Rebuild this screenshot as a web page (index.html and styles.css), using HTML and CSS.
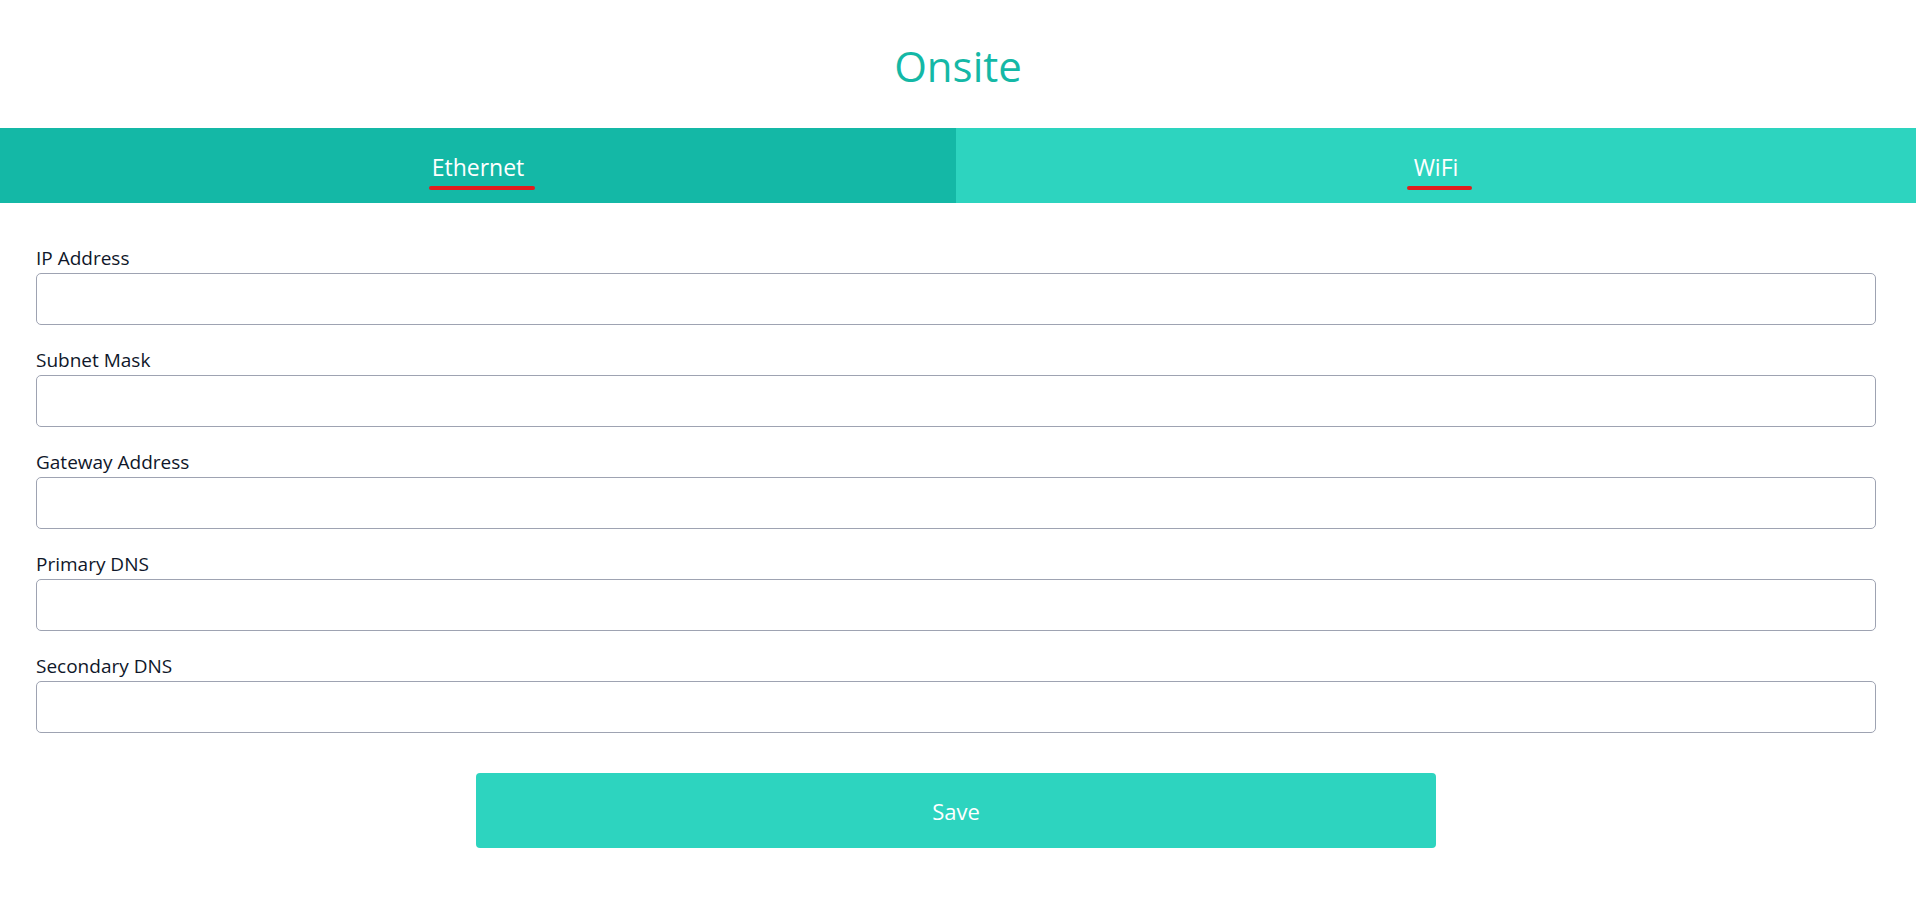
FILE: index.html
```html
<!DOCTYPE html>
<html lang="en">
<head>
<meta charset="utf-8">
<title>Onsite</title>
<link rel="stylesheet" href="styles.css">
</head>
<body>
<header class="page-header">
  <h1 class="title">Onsite</h1>
</header>
<nav class="tabs">
  <div class="tab tab-active"><span class="tab-label tab-label-eth">Ethernet</span></div>
  <div class="tab"><span class="tab-label tab-label-wifi">WiFi</span></div>
</nav>
<form class="net-form">
  <div class="field">
    <label class="field-label" for="ip">IP Address</label>
    <input class="field-input" id="ip" type="text">
  </div>
  <div class="field">
    <label class="field-label" for="mask">Subnet Mask</label>
    <input class="field-input" id="mask" type="text">
  </div>
  <div class="field">
    <label class="field-label" for="gw">Gateway Address</label>
    <input class="field-input" id="gw" type="text">
  </div>
  <div class="field">
    <label class="field-label" for="dns1">Primary DNS</label>
    <input class="field-input" id="dns1" type="text">
  </div>
  <div class="field">
    <label class="field-label" for="dns2">Secondary DNS</label>
    <input class="field-input" id="dns2" type="text">
  </div>
  <div class="actions">
    <button class="save-btn" type="button">Save</button>
  </div>
</form>
</body>
</html>
```
FILE: styles.css
```css
* { box-sizing: border-box; }
html, body { margin: 0; padding: 0; background: #ffffff; }
body {
  font-family: "Open Sans", "Noto Sans", "Liberation Sans", sans-serif;
  color: #0f172a;
}
.page-header {
  height: 128px;
  display: flex;
  align-items: flex-start;
  justify-content: center;
}
.title {
  margin: 0;
  padding-top: 38px;
  font-size: 42px;
  line-height: 56px;
  font-weight: 400;
  color: #14b8a6;
}
.tabs {
  display: grid;
  grid-template-columns: 956fr 960fr;
  height: 75px;
}
.tab {
  display: flex;
  align-items: center;
  justify-content: center;
  background: #2dd4bf;
  color: #ffffff;
}
.tab-active { background: #14b8a6; }
.tab-label {
  position: relative;
  font-size: 23px;
  line-height: 28px;
  margin-top: 2px;
}
.tab-label::after {
  content: "";
  position: absolute;
  top: 33px;
  height: 4px;
  border-radius: 2px;
  background: #e11d1d;
}
.tab-label-eth::after { left: -3px; right: -11px; }
.tab-label-wifi::after { left: -7px; right: -14px; }
.net-form {
  padding: 43px 40px 0 36px;
  display: flex;
  flex-direction: column;
  gap: 23px;
}
.field {
  display: flex;
  flex-direction: column;
}
.field-label {
  font-size: 19px;
  line-height: 24px;
  margin-bottom: 3px;
}
.field-input {
  height: 52px;
  border: 1px solid #9ea3b2;
  border-radius: 5px;
  padding: 0 12px;
  font: inherit;
  font-size: 18px;
  background: #ffffff;
}
.actions {
  display: flex;
  justify-content: center;
  padding-top: 17px;
}
.save-btn {
  width: 960px;
  height: 75px;
  border: 0;
  border-radius: 4px;
  background: #2dd4bf;
  color: #ffffff;
  font-family: inherit;
  font-size: 22px;
}
```
